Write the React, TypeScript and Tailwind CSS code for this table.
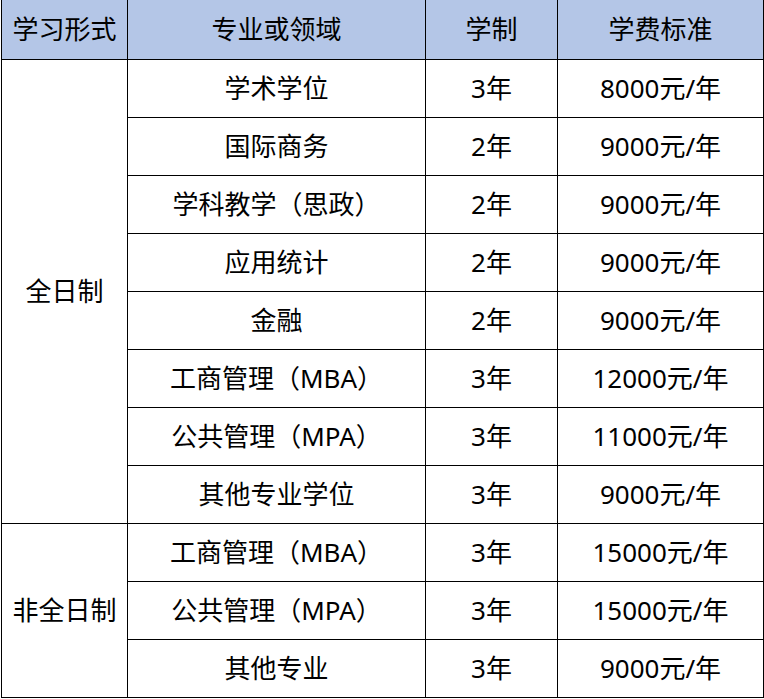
const rows: Array<{ major: string; years: string; fee: string }> = [
  { major: '学术学位', years: '3年', fee: '8000元/年' },
  { major: '国际商务', years: '2年', fee: '9000元/年' },
  { major: '学科教学（思政）', years: '2年', fee: '9000元/年' },
  { major: '应用统计', years: '2年', fee: '9000元/年' },
  { major: '金融', years: '2年', fee: '9000元/年' },
  { major: '工商管理（MBA）', years: '3年', fee: '12000元/年' },
  { major: '公共管理（MPA）', years: '3年', fee: '11000元/年' },
  { major: '其他专业学位', years: '3年', fee: '9000元/年' },
];

const partTime: Array<{ major: string; years: string; fee: string }> = [
  { major: '工商管理（MBA）', years: '3年', fee: '15000元/年' },
  { major: '公共管理（MPA）', years: '3年', fee: '15000元/年' },
  { major: '其他专业', years: '3年', fee: '9000元/年' },
];

const cell = 'border border-black text-center align-middle p-0 pb-px';

export default function App() {
  return (
    <div
      className="w-[764px] h-[699px] overflow-hidden bg-white text-black"
      style={{ fontFamily: '"Noto Sans", "Noto Sans CJK SC", sans-serif' }}
    >
      <table className="ml-px -mt-px border-collapse table-fixed w-[762px] text-[26px] leading-none">
        <colgroup>
          <col className="w-[126px]" />
          <col className="w-[298px]" />
          <col className="w-[132px]" />
          <col className="w-[206px]" />
        </colgroup>
        <thead>
          <tr className="h-[60px] bg-[#b4c6e7]">
            <th className={`${cell} font-normal`}>学习形式</th>
            <th className={`${cell} font-normal`}>专业或领域</th>
            <th className={`${cell} font-normal`}>学制</th>
            <th className={`${cell} font-normal`}>学费标准</th>
          </tr>
        </thead>
        <tbody>
          {rows.map((r, i) => (
            <tr key={r.major} className="h-[58px]">
              {i === 0 && (
                <td className={cell} rowSpan={rows.length}>
                  全日制
                </td>
              )}
              <td className={cell}>{r.major}</td>
              <td className={cell}>{r.years}</td>
              <td className={cell}>{r.fee}</td>
            </tr>
          ))}
          {partTime.map((r, i) => (
            <tr key={r.major + i} className="h-[58px]">
              {i === 0 && (
                <td className={cell} rowSpan={partTime.length}>
                  非全日制
                </td>
              )}
              <td className={cell}>{r.major}</td>
              <td className={cell}>{r.years}</td>
              <td className={cell}>{r.fee}</td>
            </tr>
          ))}
        </tbody>
      </table>
    </div>
  );
}
